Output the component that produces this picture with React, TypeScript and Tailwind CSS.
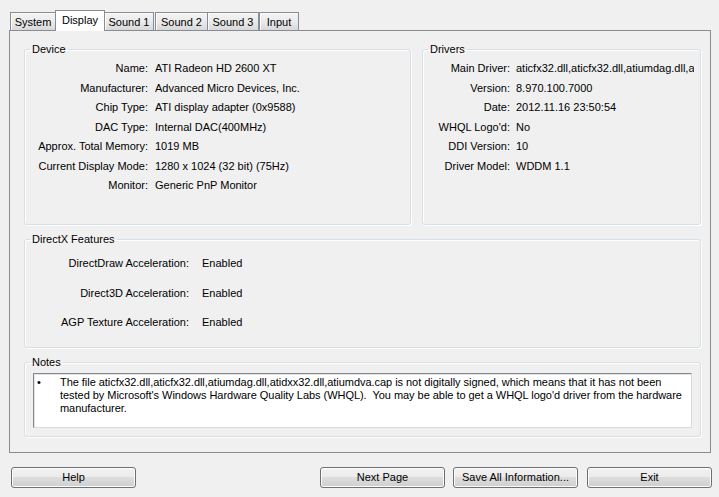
import React from "react";

const deviceRows: [string, string][] = [
  ["Name:", "ATI Radeon HD 2600 XT"],
  ["Manufacturer:", "Advanced Micro Devices, Inc."],
  ["Chip Type:", "ATI display adapter (0x9588)"],
  ["DAC Type:", "Internal DAC(400MHz)"],
  ["Approx. Total Memory:", "1019 MB"],
  ["Current Display Mode:", "1280 x 1024 (32 bit) (75Hz)"],
  ["Monitor:", "Generic PnP Monitor"],
];

const driverRows: [string, string][] = [
  ["Main Driver:", "aticfx32.dll,aticfx32.dll,atiumdag.dll,atidxx32.dll,atiumdva.cap"],
  ["Version:", "8.970.100.7000"],
  ["Date:", "2012.11.16 23:50:54"],
  ["WHQL Logo'd:", "No"],
  ["DDI Version:", "10"],
  ["Driver Model:", "WDDM 1.1"],
];

const dxRows: [string, string][] = [
  ["DirectDraw Acceleration:", "Enabled"],
  ["Direct3D Acceleration:", "Enabled"],
  ["AGP Texture Acceleration:", "Enabled"],
];

function Legend({ children }: { children: React.ReactNode }) {
  return <legend className="ml-[5px] px-[2px] leading-[13px]">{children}</legend>;
}

const boxCls =
  "border border-[#d5dfe5] rounded-[3px] shadow-[inset_1px_1px_0_#ffffff,1px_1px_0_#ffffff]";

function Tab({ label, cls }: { label: string; cls: string }) {
  return (
    <div
      className={
        "h-[18px] border border-b-0 border-[#898c95] bg-gradient-to-b from-[#f3f3f3] via-[#ebebeb] to-[#d8d8d8] flex items-center justify-center pt-[2px] shadow-[inset_1px_1px_0_#fbfbfb] " +
        cls
      }
    >
      {label}
    </div>
  );
}

function Button({ label, cls }: { label: string; cls: string }) {
  return (
    <div
      className={
        "h-[21px] w-[125px] rounded-[3px] border border-[#707070] bg-[linear-gradient(#f2f2f2_0%,#ebebeb_50%,#dddddd_50%,#cfcfcf_100%)] shadow-[inset_0_0_0_1px_#fcfcfc] flex items-center justify-center " +
        cls
      }
    >
      {label}
    </div>
  );
}

export default function App() {
  return (
    <div className="w-[719px] h-[497px] bg-[#f0f0f0] text-[11px] text-black overflow-hidden font-['Liberation_Sans',Arial,sans-serif] leading-[13px]">
      <div className="pl-[9px] pt-[10px]">
        {/* Tabs */}
        <div className="flex items-end h-[20px] pl-[1px]">
          <Tab label="System" cls="w-[46px]" />
          <div className="relative z-10 -ml-[1px] -mb-[1px] h-[21px] w-[50px] border border-b-0 border-[#898c95] bg-white flex items-center justify-center pb-[1px]">
            Display
          </div>
          <Tab label="Sound 1" cls="w-[50px] -ml-[1px]" />
          <Tab label="Sound 2" cls="w-[53px] ml-[1px]" />
          <Tab label="Sound 3" cls="w-[52px] -ml-[1px]" />
          <Tab label="Input" cls="w-[40px]" />
        </div>

        {/* Panel */}
        <div className="w-[702px] h-[423px] border border-[#898c95] pt-[12px] pl-[14px] pr-[9px]">
          <div className="flex gap-[11px]">
            <fieldset className={boxCls + " w-[387px] h-[182px]"}>
              <Legend>Device</Legend>
              <div className="pt-[3px] flex flex-col">
                {deviceRows.map(([k, v]) => (
                  <div key={k} className="h-[19.5px] flex items-center">
                    <div className="w-[123px] text-right whitespace-nowrap">{k}</div>
                    <div className="ml-[7px] whitespace-nowrap">{v}</div>
                  </div>
                ))}
              </div>
            </fieldset>
            <fieldset className={boxCls + " w-[279px] h-[182px]"}>
              <Legend>Drivers</Legend>
              <div className="pt-[3px] flex flex-col">
                {driverRows.map(([k, v]) => (
                  <div key={k} className="h-[19.5px] flex items-center">
                    <div className="w-[87px] text-right whitespace-nowrap">{k}</div>
                    <div className="ml-[6px] w-[178px] overflow-hidden whitespace-nowrap">{v}</div>
                  </div>
                ))}
              </div>
            </fieldset>
          </div>

          <fieldset className={boxCls + " mt-[8px] w-[677px] h-[115px]"}>
            <Legend>DirectX Features</Legend>
            <div className="pt-[3px] flex flex-col">
              {dxRows.map(([k, v]) => (
                <div key={k} className="h-[29.5px] flex items-center">
                  <div className="w-[164px] text-right whitespace-nowrap">{k}</div>
                  <div className="ml-[13px] whitespace-nowrap">{v}</div>
                </div>
              ))}
            </div>
          </fieldset>

          <fieldset className={boxCls + " mt-[8px] w-[677px] h-[81px]"}>
            <Legend>Notes</Legend>
            <div className="pt-[4px] pl-[8px]">
              <div className="w-[659px] h-[55px] bg-white border border-t-[#828790] border-l-[#828790] border-r-[#dadada] border-b-[#dadada] shadow-[inset_1px_1px_0_#e3e3e3] pt-[2px] flex">
                <div className="w-[26px] pl-[3px]">•</div>
                <div className="whitespace-pre tracking-[-0.04px]">
                  <div>The file aticfx32.dll,aticfx32.dll,atiumdag.dll,atidxx32.dll,atiumdva.cap is not digitally signed, which means that it has not been</div>
                  <div>tested by Microsoft's Windows Hardware Quality Labs (WHQL).  You may be able to get a WHQL logo'd driver from the hardware</div>
                  <div>manufacturer.</div>
                </div>
              </div>
            </div>
          </fieldset>
        </div>

        {/* Buttons */}
        <div className="flex mt-[14px]">
          <Button label="Help" cls="ml-[2px]" />
          <Button label="Next Page" cls="ml-[184px]" />
          <Button label="Save All Information..." cls="ml-[8px]" />
          <Button label="Exit" cls="ml-[9px]" />
        </div>
      </div>
    </div>
  );
}
